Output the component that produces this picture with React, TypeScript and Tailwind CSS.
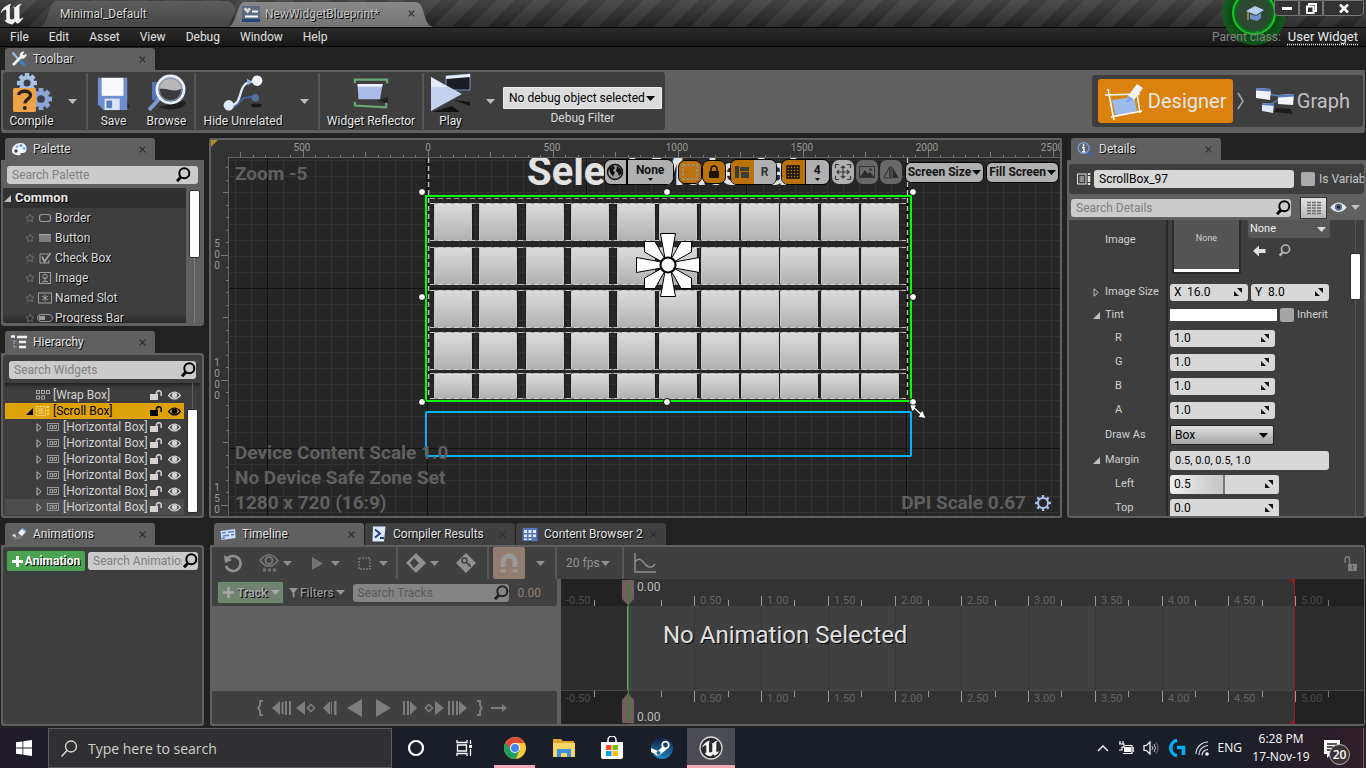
import React from "react";

const SHADOW = "[text-shadow:1px_1px_0_#000]";

/* ---------- small shared drawings ---------- */

function Caret({ className = "text-[#bdbdbd]" }: { className?: string }) {
  return (
    <svg width="9" height="5" viewBox="0 0 9 5" className={`shrink-0 ${className}`} aria-hidden="true">
      <path d="M0 0h9L4.5 5z" fill="currentColor" />
    </svg>
  );
}

function Close({ className = "" }: { className?: string }) {
  return (
    <button aria-label="Close tab" className={`flex h-3 w-3 items-center justify-center text-[#2e2e2e] ${className}`}>
      <svg width="7" height="7" viewBox="0 0 7 7" aria-hidden="true">
        <path d="M.7 .7l5.6 5.6M6.3 .7L.7 6.3" stroke="currentColor" strokeWidth="1.2" />
      </svg>
    </button>
  );
}

function Magnifier({ className = "text-black", size = 16 }: { className?: string; size?: number }) {
  return (
    <svg width={size} height={size} viewBox="0 0 16 16" className={`shrink-0 ${className}`} aria-hidden="true">
      <circle cx="9.3" cy="6.3" r="5" fill="none" stroke="currentColor" strokeWidth="2" />
      <path d="M6 10L2 14.2" stroke="currentColor" strokeWidth="3" />
    </svg>
  );
}

function SearchBox({ label, className = "", icon = "text-black", hint = "placeholder:text-[#808080]" }: { label: string; className?: string; icon?: string; hint?: string }) {
  return (
    <label className={`flex items-center rounded-[3px] pl-[5px] ${className}`}>
      <input
        type="text"
        aria-label={label}
        placeholder={label}
        className={`min-w-0 flex-1 bg-transparent text-[12px] leading-4 outline-none ${hint}`}
      />
      <Magnifier className={icon} />
    </label>
  );
}

function Tri({ open, className = "text-[#bdbdbd]" }: { open?: boolean; className?: string }) {
  return open ? (
    <svg width="7" height="7" viewBox="0 0 7 7" className={`shrink-0 ${className}`} aria-hidden="true">
      <path d="M7 0v7H0z" fill="currentColor" />
    </svg>
  ) : (
    <svg width="7" height="9" viewBox="0 0 7 9" className={`shrink-0 ${className}`} aria-hidden="true">
      <path d="M1 .8L5.2 4.5L1 8.2z" fill="none" stroke="currentColor" />
    </svg>
  );
}

function UnrealMark({ size, ring }: { size: number; ring?: boolean }) {
  return (
    <svg width={size} height={size} viewBox={ring ? "0 0 24 24" : "2.500 2.500 19 19"} aria-hidden="true">
      {ring && <circle cx="12" cy="12" r="11" fill="#2a2a2c" stroke="#d8d8d8" strokeWidth="1.3" />}
      <path
        d="M11 4.6C7 5.4 3.2 9 3 12.2c1-1.6 2.4-3 3.4-3 .8 0 .9.5.9 1.3v5.6c0 1-.6 1.2-1.5 1.1 1.5 2.2 3.8 3 6.2 3.1l2-2 1.7 1.5c2.3-1.1 4-3.1 4.7-5.1-1 .9-1.900 1.300-2.400 1.300-.5 0-.7-.3-.7-1V7.300c0-1 1.200-2.200 2-2.700-1.900 0-4.100 1.300-5.200 2.900-.4-.4-1-.7-1.700-.7.700.5.9 1.100.9 2v6.800c-.6.600-1.300.9-2 .9-.900 0-1.300-.5-1.300-1.400V8.200c0-1.500.3-2.600 1-3.600z"
        fill="#f4f4f4"
      />
    </svg>
  );
}

/* ---------- tabs ---------- */

function PanelTab({ title, icon, active = true }: { title: string; icon: React.ReactNode; active?: boolean }) {
  return (
    <div className={`flex h-[22px] w-[150px] items-center rounded-t-[3px] pl-[6px] pr-[7px] ${active ? "bg-[#606060]" : "bg-[#404040]"}`}>
      <span className="flex w-4 shrink-0 justify-center">{icon}</span>
      <span className={`ml-[6px] flex-1 whitespace-nowrap text-[12px] leading-4 text-[#e4e4e4] ${SHADOW}`}>{title}</span>
      <Close />
    </div>
  );
}

const TabIcons = {
  tools: (
    <svg width="16" height="16" viewBox="0 0 16 16">
      <path d="M1.500 1.500l6 7" stroke="#9dbdf0" strokeWidth="2" />
      <path d="M2 14L10.500 5.500" stroke="#f2f2f2" strokeWidth="2.600" />
      <path d="M9.300 5A3.200 3.200 0 0 1 13 1l-1.800 2.200 1.500 1.600L15 3.200A3.300 3.300 0 0 1 10.600 7z" fill="#f2f2f2" stroke="#f2f2f2" />
      <path d="M9 9.500l5 4.500" stroke="#3f7fd4" strokeWidth="3" />
    </svg>
  ),
  palette: (
    <svg width="16" height="14" viewBox="0 0 16 14">
      <path d="M1 9C1 4 5 1 9.500 1S15.500 4 15.500 7 13 11.500 11 11c-1.500-.3-2 .5-1.500 1.500S6 13.500 4 12.500 1 11 1 9z" fill="#f4f7ff" />
      <circle cx="6" cy="4.500" r="1.500" fill="#8bb8f0" /><circle cx="10" cy="3.500" r="1.500" fill="#5f97e0" />
      <circle cx="13" cy="6.300" r="1.500" fill="#74a8ec" /><circle cx="5" cy="9" r="1.700" fill="#444" />
    </svg>
  ),
  tree: (
    <svg width="16" height="14" viewBox="0 0 16 14">
      <path d="M0 1.500h4M6 2h10" stroke="#f0f0f0" strokeWidth="2.500" />
      <path d="M3 5v8M3 6.500h3M3 12h3" stroke="#9ab4e0" strokeDasharray="1.500 1" />
      <path d="M8 7h7M8 12h7" stroke="#f0f0f0" strokeWidth="2.500" />
    </svg>
  ),
  anim: (
    <svg width="16" height="14" viewBox="0 0 16 14">
      <path d="M0 9l3-3 3 4 5-8 4 4-6 6-5 1z" fill="#777" />
      <path d="M7 6l4-4.500 4 3-4 4.500z" fill="#e9f0ff" /><path d="M12 1l3 2.500-1 1.500-3-2.500z" fill="#79a6e6" />
      <path d="M1 8l3-1 1.500 4z" fill="#e2e2e2" />
    </svg>
  ),
  info: (
    <svg width="17" height="17" viewBox="0 0 17 17">
      <path d="M10.500 10.500l5 5" stroke="#3c66b8" strokeWidth="2.500" />
      <circle cx="7" cy="7" r="5.800" fill="#5a6470" stroke="#7fa6e8" strokeWidth="1.200" />
      <path d="M7 3v2M5.300 6.500H7.300V10.500M5.300 10.800H9" stroke="#fff" strokeWidth="1.600" fill="none" />
    </svg>
  ),
  film: (
    <svg width="16" height="13" viewBox="0 0 16 13">
      <path d="M.5 3L15 1l.5 9L1.500 12z" fill="#cfe0fb" />
      <path d="M2 5l4-.5M8 4.200l6-.7M3 8l6-.8M11 7l3-.4M2 10.500l3-.4" stroke="#5d80c8" strokeWidth="1.500" />
    </svg>
  ),
  log: (
    <svg width="14" height="16" viewBox="0 0 14 16">
      <path d="M1 .5h12.500L12 15.500H.5z" fill="#dce8ff" /><path d="M3 3.500l5 4-5 4M8 12h4" stroke="#173f84" strokeWidth="1.800" fill="none" />
    </svg>
  ),
  grid: (
    <svg width="16" height="15" viewBox="0 0 16 15">
      <path d="M.5 1H15.500V14H.5z" fill="#5276bd" />
      <path d="M2 3h3v3H2zM6.500 3h3v3h-3zM11 3h3v3h-3zM2 7.500h3v2.500H2zM6.500 7.500h3v2.500h-3zM11 7.500h3v2.500h-3zM2 11.500h3v1.500H2zM6.500 11.500h3v1.500h-3z" fill="#e5edfd" />
    </svg>
  ),
};

/* ---------- title and menu ---------- */

function TitleBar() {
  return (
    <header className="relative flex h-7 shrink-0 border-b border-black bg-[linear-gradient(180deg,rgba(80,80,80,0.55),rgba(20,20,20,0.5)),repeating-linear-gradient(135deg,#303030_0_13px,#494949_13px_26px)]">
      <div className="flex w-10 items-center"><UnrealMark size={25} /></div>
      <button className="h-full w-[196px] bg-[linear-gradient(180deg,#5e5e5e,#464646)] pl-5 text-left text-[12px] text-[#d8d8d8] [clip-path:path('M0_27C8_26_9_2_16_1H186C192_1_194_5_196_10L188_27Z')]">
        <span className={SHADOW}>Minimal_Default</span>
      </button>
      <div className="-ml-2 flex h-full w-[206px] items-center bg-[linear-gradient(180deg,#8a8a8a,#747474)] pl-[14px] pr-[13px] [clip-path:path('M0_27C8_26_9_3_16_2H188C198_3_194_26_206_27Z')]">
        <svg width="18" height="16" viewBox="0 0 18 16" aria-hidden="true">
          <rect width="18" height="16" fill="#24457c" /><rect y="0" width="18" height="13" fill="#5a6a80" />
          <path d="M1.500 3l2-1.500L5.500 3l2-1.500 1.500 2-3.500 4z" fill="#d5d5d5" />
          <path d="M10 5.500h6M3 10.500h13" stroke="#fff" strokeWidth="2" />
        </svg>
        <span className={`ml-[5px] flex-1 text-[12px] text-[#c4c4c4] ${SHADOW}`}>NewWidgetBlueprint*</span>
        <Close className="mr-1" />
      </div>
      <div className="ml-auto flex pr-[2px]">
        <button aria-label="Tutorials" className="relative h-7 w-16">
          <svg width="68" height="46" viewBox="0 0 68 46" className="absolute left-0 top-0 z-10" aria-hidden="true">
            <defs>
              <radialGradient id="halo"><stop offset="0.5" stopColor="#1d4a22" /><stop offset="0.64" stopColor="#0f7a1c" /><stop offset="0.65" stopColor="#0b4411" /><stop offset="1" stopColor="#0d6a18" stopOpacity="0.75" /></radialGradient>
            </defs>
            <circle cx="32" cy="13" r="32" fill="url(#halo)" />
            <circle cx="32" cy="13" r="21" fill="none" stroke="#19c22d" strokeWidth="2" />
            <circle cx="32" cy="13" r="17" fill="#3a4a3d" opacity=".6" />
            <path d="M24 11l9-5 9 4-8 5z" fill="#b9cdf5" /><path d="M28 14v5l7 2 4-3v-5l-5 3z" fill="#7190cf" />
            <path d="M26 12v8" stroke="#d0a04c" strokeWidth="1.300" />
          </svg>
        </button>
        <div className="relative z-20 -ml-3 flex h-4">
          <button aria-label="Minimize" className="flex w-[25px] items-center justify-center rounded-bl border border-[#777] bg-[#333]">
            <span className="h-[3px] w-[10px] bg-white" />
          </button>
          <button aria-label="Restore" className="flex w-6 items-center justify-center border border-[#777] bg-[#333]">
            <svg width="11" height="11" viewBox="0 0 11 11"><path d="M3 3V1h7v7H8M1 3.500h6.500V10H1z" fill="none" stroke="#fff" strokeWidth="2" /></svg>
          </button>
          <button aria-label="Close" className="flex w-[41px] items-center justify-center rounded-br border border-[#777] bg-[#333]">
            <svg width="10" height="9" viewBox="0 0 10 9"><path d="M1 .5l8 8M9 .5l-8 8" stroke="#fff" strokeWidth="2.600" /></svg>
          </button>
        </div>
      </div>
    </header>
  );
}

function MenuBar() {
  return (
    <nav className="flex h-[19px] shrink-0 items-center gap-5 border-b border-black bg-[linear-gradient(180deg,#2a2a2a,#181818)] px-[10px] text-[12px] text-[#e0e0e0]">
      {["File", "Edit", "Asset", "View", "Debug", "Window", "Help"].map((m) => (
        <button key={m} className="leading-4">{m}</button>
      ))}
      <div className="relative z-20 -mr-[2px] ml-auto flex items-center gap-[7px]">
        <span className="text-[#858585]">Parent class:</span>
        <a href="#parent" className="text-[13px] leading-4 text-[#ececec] underline decoration-dotted underline-offset-[3px]">User Widget</a>
      </div>
    </nav>
  );
}

/* ---------- toolbar ---------- */

const gear = (cx: number, cy: number, r: number, fill: string) => (
  <g fill={fill}>
    {[0, 45, 90, 135].map((a) => (
      <rect key={a} x={cx - r * 0.22} y={cy - r} width={r * 0.44} height={r * 2} transform={`rotate(${a} ${cx} ${cy})`} />
    ))}
    <circle cx={cx} cy={cy} r={r * 0.75} />
    <circle cx={cx} cy={cy} r={r * 0.35} fill="#3a3f48" />
  </g>
);

const ToolIcons = {
  compile: (
    <svg width="40" height="40" viewBox="0 0 40 40">
      {gear(15, 10, 10, "#a9bfe6")}{gear(29, 26, 11, "#8aa5d6")}
      <rect x="1" y="15" width="23" height="24" rx="1.500" fill="#f0a248" />
      <path d="M6.500 22c.5-5 12-5 12 .3 0 4-5.500 3.700-5.700 8" fill="none" stroke="#2a2320" strokeWidth="3.400" />
      <rect x="10.800" y="33" width="4" height="4" rx="2" fill="#2a2320" />
    </svg>
  ),
  save: (
    <svg width="38" height="36" viewBox="0 0 40 38">
      <path d="M28 34h9l-5-9z" fill="#151515" opacity=".7" />
      <path d="M3 3h31v34H9L3 31z" fill="#6f8fd2" />
      <path d="M7 3h23v19H7z" fill="#f7f9ff" /><path d="M10 25h16v12H10z" fill="#dde5f5" /><path d="M12 27h6v8h-6z" fill="#5c7cc0" />
    </svg>
  ),
  browse: (
    <svg width="42" height="38" viewBox="0 0 42 38">
      <path d="M12 33c12 5 30 2 27-6z" fill="#151515" opacity=".75" />
      <path d="M6 8h12v18H6z" fill="#5474b2" />
      <path d="M14 24L3 36" stroke="#7f9ad0" strokeWidth="4" />
      <circle cx="24.500" cy="15.500" r="13.500" fill="#3b3b3d" stroke="#e7eefc" strokeWidth="3" />
      <path d="M13 15A11.500 11.500 0 0 1 36 14C28 20 22 13 13 15z" fill="#b8b8ba" />
      <circle cx="24.500" cy="15.500" r="11.200" fill="none" stroke="#7e93bb" />
    </svg>
  ),
  hide: (
    <svg width="40" height="36" viewBox="0 0 42 38">
      <path d="M8 33c10 2 8-8 15-9l8-1" fill="none" stroke="#42609c" strokeWidth="2" /><circle cx="34" cy="24" r="4" fill="#54709f" />
      <ellipse cx="35" cy="32" rx="6" ry="2" fill="#181818" />
      <path d="M8 32c15-1 5-25 24-25" fill="none" stroke="#e0e8fa" strokeWidth="2.500" />
      <path d="M25 4l6 3-5 4" fill="#8fb0e6" />
      <circle cx="36" cy="6" r="5.500" fill="#f2f6ff" /><circle cx="6" cy="32" r="5.500" fill="#dfe9fc" />
    </svg>
  ),
  reflect: (
    <svg width="40" height="34" viewBox="0 0 42 38">
      <path d="M28 28l12-5v8z" fill="#181818" opacity=".7" />
      <path d="M3 8V4h36v4M3 29v4l35 2v-5" fill="none" stroke="#69a878" strokeWidth="2.500" />
      <path d="M6 9h28l-3 17H7z" fill="#a9bde8" /><path d="M6 9h28l-.5 3H6.200z" fill="#e9f0ff" />
    </svg>
  ),
  play: (
    <svg width="42" height="40" viewBox="0 0 42 40">
      <path d="M2 39h28l-8-6zM24 27l16 2v4z" fill="#131313" />
      <path d="M16 3l24-2v16H16z" fill="#1b1d24" stroke="#7692cc" /><path d="M16 3l24-2v3l-24 2z" fill="#e8efff" />
      <path d="M1 4v34l31-17z" fill="#c4d2f1" /><path d="M1 4v10l16 0z" fill="#e3ebfb" />
    </svg>
  ),
};

function Tool({ icon, label, className = "" }: { icon: React.ReactNode; label: string; className?: string }) {
  return (
    <button className={`flex h-full flex-col items-center justify-between whitespace-nowrap pb-[2px] ${className}`}>
      <span className="flex h-10 items-center">{icon}</span>
      <span className={`text-[12px] leading-3 text-[#e6e6e6] ${SHADOW}`}>{label}</span>
    </button>
  );
}

const Divider = () => <div className="h-full w-[2px] shrink-0 bg-[#585858]" />;

function Dropper({ label, w = "w-7" }: { label: string; w?: string }) {
  return <button aria-label={label} className={`flex h-full shrink-0 items-center justify-center ${w}`}><Caret /></button>;
}

function Toolbar() {
  return (
    <section className="shrink-0 px-[1px] pt-[1px]">
      <div className="flex pl-1"><PanelTab title="Toolbar" icon={TabIcons.tools} /></div>
      <div className="flex h-[63px] items-center justify-between rounded-b-[3px] bg-[#606060] px-[2px] pb-[1px]">
        <div className="flex h-[58px] items-center rounded-[3px] bg-[#3e3e3e] p-[1px] pr-[3px]">
          <Tool icon={ToolIcons.compile} label="Compile" className="w-[55px]" /><Dropper label="Compile options" w="w-[27px]" />
          <Divider />
          <Tool icon={ToolIcons.save} label="Save" className="w-[51px]" />
          <Tool icon={ToolIcons.browse} label="Browse" className="w-[55px]" />
          <Divider />
          <Tool icon={ToolIcons.hide} label="Hide Unrelated" className="w-[94px]" /><Dropper label="Hide options" />
          <Divider />
          <Tool icon={ToolIcons.reflect} label="Widget Reflector" className="w-[102px]" />
          <Divider />
          <Tool icon={ToolIcons.play} label="Play" className="w-[53px]" /><Dropper label="Play options" w="w-[26px]" />
          <label className="flex w-[159px] flex-col items-center gap-[1px] pt-[11px]">
            <span className="relative flex w-full items-center">
              <select className="h-[22px] w-full appearance-none rounded-[1px] border border-[#f0f0f0] bg-[#dcdcdc] pl-[5px] text-[12px] text-black">
                <option>No debug object selected</option>
              </select>
              <Caret className="pointer-events-none absolute right-[7px] text-black" />
            </span>
            <span className="text-[12px] leading-4 text-[#dcdcdc]">Debug Filter</span>
          </label>
        </div>
        <div className="flex h-[52px] items-center rounded-[3px] bg-[#3e3e3e] py-1 pl-[6px] pr-[13px]">
          <button className="flex h-11 w-[135px] items-center rounded-[3px] bg-[#da820d] pl-[5px] text-[20px] text-[#e8e8e8]">
            <svg width="41" height="40" viewBox="0 0 41 40" aria-hidden="true">
              <path d="M9 19l22-3 3 14-21 5z" fill="#9dbcec" />
              <path d="M2 14l35 -1M8 36l31-6M5 8l6 31M33 6l4 26" stroke="#fff" strokeWidth="1.600" />
              <path d="M22 23l3-8L34 3l6 4-9 12z" fill="#eef4ff" /><path d="M22 23l3-8 3 1 3 3z" fill="#7fa9e8" />
            </svg>
            <span className="ml-1">Designer</span>
          </button>
          <svg width="8" height="18" viewBox="0 0 8 18" className="ml-1" aria-hidden="true"><path d="M1 1l5 8-5 8" fill="none" stroke="#a5a5a5" strokeWidth="1.600" /></svg>
          <button className="ml-[10px] flex items-center text-[20px] text-[#c2c2c2]">
            <svg width="40" height="30" viewBox="0 0 40 30" aria-hidden="true">
              <path d="M18 26l20 2-3-5-14-1z" fill="#1b1b1b" />
              <path d="M14 8L24 10M14 20l10-7" stroke="#6280bd" strokeWidth="1.500" />
              <path d="M1 2l15 1-1 11L1 12z" fill="#f1f4fb" /><path d="M1 2l15 1v2.500L1 4.500z" fill="#5578bd" />
              <path d="M23 9l16-1-1 11-15-1z" fill="#f1f4fb" /><path d="M23 9l16-1v2.500l-16 1z" fill="#5578bd" />
              <path d="M7 17l12 1-1 9-11-2z" fill="#dfe6f6" /><path d="M7 17l12 1v2l-12-1z" fill="#5578bd" />
            </svg>
            <span className="ml-[2px]">Graph</span>
          </button>
        </div>
      </div>
    </section>
  );
}

/* ---------- left column ---------- */

const paletteIcons: Record<string, React.ReactNode> = {
  Border: <rect x="2.500" y="3.500" width="11" height="7" rx="2.500" fill="none" stroke="#9c9c9c" strokeWidth="1.200" />,
  Button: <g><rect x="2" y="3" width="12" height="8" fill="#7e7e7e" /><path d="M2 3.500h12" stroke="#a8a8a8" /></g>,
  "Check Box": <g fill="none" stroke="#a0a0a0"><path d="M11 3H3v9h9V9" /><path d="M5 5.500l2.500 5L13.500 2" strokeWidth="1.800" /></g>,
  Image: <g fill="none" stroke="#a0a0a0"><rect x="2.500" y="1.500" width="11" height="11" /><circle cx="8" cy="5.500" r="2.300" /><path d="M8 5.500v5M5 10.500h6" /></g>,
  "Named Slot": <g fill="none" stroke="#a0a0a0"><rect x="1.500" y="2" width="13" height="10" /><path d="M8 3.500v7M5 5l6 4M11 5L5 9" /></g>,
  "Progress Bar": <g><rect x=".5" y="3.500" width="15" height="7" rx="3.500" fill="none" stroke="#9c9c9c" /><rect x="2" y="5" width="6" height="4" fill="#9c9c9c" /></g>,
};

function Palette() {
  return (
    <section className="flex min-h-0 flex-1 flex-col">
      <div className="flex pl-1"><PanelTab title="Palette" icon={TabIcons.palette} /></div>
      <div className="flex min-h-0 flex-1 flex-col rounded-b-[3px] bg-[#606060] p-[2px] pb-[3px]">
        <SearchBox label="Search Palette" className="m-1 h-[18px] bg-[#cbcbcb] pr-[7px]" />
        <div className="flex min-h-0 flex-1">
          <div className="min-w-0 flex-1 overflow-hidden rounded-bl-[3px] bg-[linear-gradient(0deg,#2a2a2a,#3e3e3e_10px)]">
            <button className={`flex h-5 w-full items-center gap-1 bg-[#303030] pl-[1px] text-[13px] font-bold text-[#e8e8e8] ${SHADOW}`}>
              <Tri open />Common
            </button>
            <ul>
              {Object.keys(paletteIcons).map((n) => (
                <li key={n} className={`flex h-5 items-center pl-[22px] text-[12px] text-[#dadada] ${SHADOW}`}>
                  <svg width="10" height="10" viewBox="0 0 10 10" aria-hidden="true"><path d="M5 1l1.200 2.700 2.800.3-2.100 1.900.6 2.900L5 7.300 2.500 8.800l.6-2.900L1 4l2.800-.3z" fill="none" stroke="#6b6b6b" /></svg>
                  <svg width="16" height="14" viewBox="0 0 16 14" className="mx-[2px]" aria-hidden="true">{paletteIcons[n]}</svg>
                  {n}
                </li>
              ))}
            </ul>
          </div>
          <div className="flex w-4 flex-col items-center pt-[2px]">
            <div className="h-[68px] w-[11px] rounded-[2px] border border-[#303030] bg-white" />
            <div className="w-px flex-1 bg-[#7c7c7c]" />
          </div>
        </div>
      </div>
    </section>
  );
}

function LockIcon() {
  return (
    <svg width="12" height="10" viewBox="0 0 12 10" aria-hidden="true">
      <rect x="0" y="4" width="8" height="6" fill="currentColor" />
      <path d="M6.500 5V3a2.300 2.300 0 0 1 4.700 0v3" fill="none" stroke="currentColor" strokeWidth="1.500" />
    </svg>
  );
}

function EyeIcon() {
  return (
    <svg width="13" height="9" viewBox="0 0 13 9" aria-hidden="true">
      <path d="M.5 4.500Q6.500 -2.500 12.500 4.500Q6.500 11.500 .5 4.500z" fill="none" stroke="currentColor" strokeWidth="1.200" />
      <circle cx="6.500" cy="4.300" r="2.700" fill="currentColor" />
    </svg>
  );
}

function TreeRow({ indent, tri, icon, label, tone = "text-[#d2d2d2]" }: { indent: string; tri?: React.ReactNode; icon: React.ReactNode; label: string; tone?: string }) {
  return (
    <li className={`flex h-4 shrink-0 items-center pr-[3px] text-[12px] ${indent} ${tone}`}>
      {tri}
      <svg width="14" height="12" viewBox="0 0 14 12" className="mx-[3px] shrink-0" aria-hidden="true">{icon}</svg>
      <span className="min-w-0 flex-1 overflow-hidden whitespace-nowrap leading-4">{label}</span>
      <button aria-label="Lock" className="ml-[3px] mr-[6px]"><LockIcon /></button>
      <button aria-label="Visibility"><EyeIcon /></button>
    </li>
  );
}

const scrollGlyph = (
  <g fill="none" stroke="currentColor"><rect x=".5" y="1.500" width="9" height="9" strokeDasharray="2 1" /><path d="M2.500 4h5M2.500 6h5M2.500 8h5" /><path d="M12 1v10" strokeDasharray="2 1.500" strokeWidth="2" /></g>
);
const boxGlyph = (
  <g fill="none" stroke="#9a9a9a"><rect x="1.500" y="2.500" width="11" height="7" /><rect x="4" y="4.500" width="2.500" height="3" /><rect x="8" y="4.500" width="2.500" height="3" /></g>
);
const wrapGlyph = (
  <g fill="none" stroke="#a8a8a8"><rect x=".5" y="1.500" width="3" height="3" /><rect x="5.500" y="1.500" width="3" height="3" /><rect x="10.500" y="1.500" width="3" height="3" /><rect x=".5" y="7" width="3" height="3" /><rect x="5.500" y="7" width="3" height="3" /></g>
);

function Hierarchy() {
  return (
    <section className="mt-[5px] flex shrink-0 flex-col">
      <div className="flex pl-1"><PanelTab title="Hierarchy" icon={TabIcons.tree} /></div>
      <div className="rounded-[3px] rounded-tl-none bg-[#606060] p-[2px]">
        <div className="rounded-[3px] bg-[#3e3e3e] px-[2px] pb-[1px] pt-[6px]">
          <SearchBox label="Search Widgets" className="ml-1 mr-[4px] h-[18px] bg-[#cbcbcb]" />
          <div className="mt-1 flex h-[132px] shadow-[inset_0_5px_4px_-3px_#1d1d1d]">
            <ul className="flex min-w-0 flex-1 flex-col justify-end overflow-hidden">
              <TreeRow indent="pl-7" icon={wrapGlyph} label="[Wrap Box]" />
              <TreeRow indent="bg-[#dea20a] pl-[21px]" tri={<Tri open className="text-black" />} tone="text-black" icon={<g className="text-[#f6d98c]">{scrollGlyph}</g>} label="[Scroll Box]" />
              {[0, 1, 2, 3, 4, 5].map((i) => (
                <TreeRow key={i} indent={i === 5 ? "bg-[#4c4c4c] pl-[31px]" : "pl-[31px]"} tri={<Tri />} icon={boxGlyph} label="[Horizontal Box]" />
              ))}
            </ul>
            <div className="flex w-4 flex-col items-center pb-[2px]">
              <div className="w-px flex-1 bg-[#606060]" />
              <div className="h-[104px] w-[11px] rounded-[2px] border border-[#2d2d2d] bg-white" />
            </div>
          </div>
        </div>
      </div>
    </section>
  );
}

/* ---------- designer canvas ---------- */

const COLS = [434, 479, 526, 571, 617, 659, 701, 741, 780, 821, 861];
const ROWS: [number, number][] = [[203, 38], [247, 38], [290, 38], [332, 38], [373, 26]];
const range = (from: number, to: number, step: number) => {
  const out: number[] = [];
  for (let v = from; v <= to; v += step) out.push(v);
  return out;
};

function Surface() {
  return (
    <svg width="849" height="376" viewBox="211 140 849 376" className="absolute inset-0" aria-label="Design surface">
      <defs>
        <linearGradient id="cell" x1="0" y1="0" x2="0" y2="1"><stop offset="0" stopColor="#dcdcdc" /><stop offset="1" stopColor="#b0b0b0" /></linearGradient>
        <linearGradient id="gold" x1="0" y1="0" x2="1" y2="1"><stop offset="0" stopColor="#c79f28" /><stop offset="1" stopColor="#8f701a" /></linearGradient>
      </defs>
      <rect x="211" y="140" width="849" height="376" fill="#333" />
      <rect x="228" y="157" width="832" height="359" fill="#262626" />
      <g shapeRendering="crispEdges">
        {range(235, 1060, 16).map((x) => <rect key={x} x={x} y="158" width="1" height="358" fill="#323232" />)}
        {range(160, 516, 16).map((y) => <rect key={y} x="229" y={y} width="831" height="1" fill="#323232" />)}
        {[267, 427, 586, 746, 906].map((x) => <rect key={x} x={x} y="158" width="1" height="358" fill="#111" />)}
        {[288, 448].map((y) => <rect key={y} x="229" y={y} width="831" height="1" fill="#111" />)}
        <path d="M228.500 516V157.500H1060" fill="none" stroke="#626262" />
        {range(0, 66, 1).map((i) => {
          const x = Math.round(240 + i * 12.5);
          const h = i % 10 === 5 ? 7 : i % 5 === 0 ? 5 : 2;
          return <rect key={i} x={x} y={157 - h} width="1" height={h} fill="#7a7a7a" />;
        })}
        {range(0, 27, 1).map((i) => {
          const y = Math.round(167 + i * 12.5);
          const w = i % 10 === 7 ? 7 : i % 5 === 2 ? 5 : 2;
          return <rect key={i} x={228 - w} y={y} width={w} height="1" fill="#7a7a7a" />;
        })}
      </g>
      <path d="M209 138h11l-11 11z" fill="url(#gold)" />
      <g fill="#9a9a9a" fontSize="10" fontFamily="Roboto" textAnchor="middle">
        {[["500", 302], ["0", 428], ["500", 552], ["1000", 677], ["1500", 802], ["2000", 927], ["2500", 1052]].map(([t, x], i) => <text key={i} x={x} y="151">{t}</text>)}
        {[["5", 247], ["0", 258], ["0", 269], ["1", 366], ["0", 377], ["0", 388], ["0", 399], ["1", 491], ["5", 502], ["0", 513]].map(([t, y], i) => <text key={i} x="217" y={y}>{t}</text>)}
      </g>
      <clipPath id="below"><rect x="229" y="158" width="831" height="358" /></clipPath>
      <text x="527" y="185" fontSize="40" fontWeight="700" fontFamily="Roboto" fill="#e2e2e2" clipPath="url(#below)">Select Material</text>
      <path d="M427.500 158V396M907.500 158V396" stroke="#000" strokeWidth="2" />
      <path d="M428.500 158V398M907.500 158V398" stroke="#c4c4c4" strokeDasharray="5 3" strokeWidth="1.500" />
      <path d="M430 198.500H906" stroke="#999" strokeDasharray="5 3" />
      {ROWS.map(([y, h]) => (
        <g key={y}>
          <path d={`M430 ${y + 0.5}H906M430 ${y + h - 0.5}H906`} stroke="#5c5c5c" strokeWidth="1" />
          {COLS.map((x) => (
            <g key={x}>
              <rect x={x - 1} y={y} width="40" height={h} fill="#1c1c1c" />
              <rect x={x + 0.5} y={y + 0.5} width="37" height={h - 1} rx="1" fill="url(#cell)" stroke="#cacaca" strokeWidth="1" />
            </g>
          ))}
          <path d={`M430 ${y + 0.5}H906M430 ${y + h - 0.5}H906`} stroke="#8c8c8c" strokeOpacity="0.7" strokeWidth="1" />
          <path d={`M430 ${y + 0.5}H906M430 ${y + h - 0.5}H906`} stroke="#dcdcdc" strokeOpacity="0.75" strokeWidth="1" strokeDasharray="5 3" />
        </g>
      ))}
      <rect x="426" y="412" width="485" height="44" rx="1" fill="none" stroke="#00b4ff" strokeWidth="2" />
      <rect x="426" y="196" width="485" height="205" fill="none" stroke="#00ff00" strokeWidth="2" />
      <g fill="#fff" stroke="#000" strokeWidth="1">
        {[[422, 192], [667, 192], [913, 192], [422, 297], [913, 297], [422, 402], [667, 402], [913, 402]].map(([x, y]) => <circle key={`${x}-${y}`} cx={x} cy={y} r="3.500" />)}
        {[0, 90, 180, 270].map((a) => <path key={a} d="M660.500 233.500h15l-4.500 25h-6z" transform={`rotate(${a} 668 265)`} />)}
        {[0, 90, 180, 270].map((a) => <path key={a} d="M644.500 241.500h10.500l9 16-3.500 3.500-16-9z" transform={`rotate(${a} 668 265)`} />)}
        <circle cx="668" cy="265" r="7.500" strokeWidth="2" />
        <path d="M910 405h6.500l-1.500 2.500 5.500 5 2-2 3.500 8-8-1.500 2-2.500-5.500-5-2.500 2z" strokeWidth=".6" />
      </g>
    </svg>
  );
}

function Pill({ label, className, children }: { label: string; className: string; children: React.ReactNode }) {
  return <button aria-label={label} className={`flex h-6 shrink-0 items-center justify-center ${className}`}>{children}</button>;
}

function CanvasBar() {
  const grey = "bg-[#b0b0b0] text-[#141414]";
  return (
    <div className="absolute right-0 top-[19px] flex items-center gap-[2px] pr-[1px] text-[12px] font-bold">
      <div className="mr-[2px] flex divide-x-2 divide-black overflow-hidden rounded-[7px] border border-black">
        <Pill label="Localization" className={`w-[23px] ${grey}`}>
          <svg width="18" height="18" viewBox="0 0 18 18"><circle cx="9" cy="9" r="7.500" fill="#999" stroke="#111" strokeWidth="1.500" /><path d="M3 5l4-2.500L9 5 7 7.500l2 2-2 4-3-4zM11 3l4 3 1 4-3 3-1-3-2-2z" fill="#111" /></svg>
        </Pill>
        <button className={`flex h-6 w-[45px] flex-col items-center pt-[2px] ${grey}`}>
          <span className="leading-4">None</span><svg width="5" height="3" viewBox="0 0 5 3"><path d="M0 0h5L2.500 3z" fill="#111" /></svg>
        </button>
      </div>
      <Pill label="Show outlines" className="-mr-[2px] w-6 rounded-[7px] border border-black bg-[#bc720c]">
        <svg width="16" height="16" viewBox="0 0 16 16"><rect x="1" y="1" width="14" height="14" fill="none" stroke="#8d99a8" strokeWidth="1.500" strokeDasharray="3 1.500" /></svg>
      </Pill>
      <Pill label="Respect locks" className="mr-[2px] w-6 rounded-[7px] border border-black bg-[#bc720c]">
        <svg width="12" height="14" viewBox="0 0 12 14"><rect x="1" y="6" width="10" height="7" rx="1" fill="#1d1408" /><path d="M3 6V4a3 3 0 0 1 6 0v2" fill="none" stroke="#1d1408" strokeWidth="1.600" /></svg>
      </Pill>
      <div className="mr-[2px] flex overflow-hidden rounded-[7px] border border-black">
        <Pill label="Layout" className="w-[23px] bg-[#bc720c]"><svg width="14" height="12" viewBox="0 0 14 12"><path d="M0 0h4v12H0zM5 1h9v4H5zM6 6h8v6H6z" fill="#3c3c3c" /></svg></Pill>
        <button className="h-6 w-[22px] bg-[#b0b0b0] text-[#333]">R</button>
      </div>
      <div className="flex overflow-hidden rounded-[7px] border border-black">
        <Pill label="Grid snap" className="w-[23px] bg-[#bc720c]"><svg width="14" height="14" viewBox="0 0 14 14"><path d="M1 1h12v12H1zM4 1v12M7 1v12M10 1v12M1 4h12M1 7h12M1 10h12" fill="none" stroke="#111" strokeWidth="1.400" /></svg></Pill>
        <button className={`flex h-6 w-6 flex-col items-center border-l border-black pt-[2px] ${grey}`}>
          <span className="leading-4">4</span><svg width="5" height="3" viewBox="0 0 5 3"><path d="M0 0h5L2.500 3z" fill="#111" /></svg>
        </button>
      </div>
      <Pill label="Zoom to fit" className="w-[22px] rounded-[7px] bg-[#b0b0b0]">
        <svg width="18" height="18" viewBox="0 0 18 18"><path d="M5 1.500H1.500V5M13 1.500h3.500V5M5 16.500H1.500V13M13 16.500h3.500V13M9 3v12M3 9h12M7 5l2-2 2 2M7 13l2 2 2-2M5 7L3 9l2 2M13 7l2 2-2 2" fill="none" stroke="#3c3c3c" strokeWidth="1.200" /></svg>
      </Pill>
      <Pill label="Preview image" className="w-[22px] rounded-[7px] bg-[#686868]">
        <svg width="16" height="12" viewBox="0 0 16 12"><rect x=".5" y=".5" width="15" height="11" fill="none" stroke="#333" /><path d="M1 11l5-7 3 4 2-2 4 5z" fill="#2c2c2c" /><circle cx="11.500" cy="3.500" r="1.200" fill="#2c2c2c" /></svg>
      </Pill>
      <Pill label="Mirror" className="mr-[1px] w-[22px] rounded-[7px] bg-[#686868]">
        <svg width="16" height="13" viewBox="0 0 16 13"><path d="M6.500 1v11H.8z" fill="none" stroke="#333" /><path d="M9.500 1v11h6z" fill="#2a2a2a" /><path d="M8 0v13" stroke="#222" /></svg>
      </Pill>
      {["Screen Size", "Fill Screen"].map((t) => (
        <button key={t} className={`flex h-[21px] items-center gap-[1px] whitespace-nowrap rounded-[6px] border border-black px-[2px] ${grey}`}>{t}<Caret className="text-black" /></button>
      ))}
    </div>
  );
}

function Viewport() {
  const note = "text-[19px] font-bold leading-[25px] text-[#606060]";
  return (
    <main className="relative min-w-0 flex-1 overflow-hidden rounded-[2px] border-2 border-[#606060] bg-[#262626]">
      <Surface />
      <div className={`absolute left-6 top-[21px] ${note}`}>Zoom -5</div>
      <CanvasBar />
      <div className={`absolute bottom-[1px] left-6 ${note}`}>
        <p>Device Content Scale 1.0</p><p>No Device Safe Zone Set</p><p>1280 x 720 (16:9)</p>
      </div>
      <div className={`absolute bottom-[1px] right-2 flex items-center gap-2 ${note}`}>
        DPI Scale 0.67
        <button aria-label="DPI settings"><svg width="18" height="18" viewBox="0 0 18 18"><g stroke="#aabfea" strokeWidth="2.400">{[0, 45, 90, 135].map((a) => <path key={a} d="M9 1v16" transform={`rotate(${a} 9 9)`} />)}</g><circle cx="9" cy="9" r="5" fill="#262626" stroke="#aabfea" strokeWidth="2" /></svg></button>
      </div>
    </main>
  );
}

/* ---------- details ---------- */

function Spin({ value, label, prefix, className = "h-[17px] w-[105px]", fill }: { value: string; label: string; prefix?: string; className?: string; fill?: boolean }) {
  return (
    <label className={`flex items-center rounded-[3px] pl-1 pr-[6px] text-[12px] text-black ${className} ${fill ? "bg-[linear-gradient(90deg,#f0f0f0,#c4c4c4_53px,#777_53px,#777_55px,#d8d8d8_55px)]" : "bg-[#d8d8d8]"}`}>
      {prefix && <span className="w-[13px]">{prefix}</span>}
      <input aria-label={label} defaultValue={value} className="min-w-0 flex-1 bg-transparent leading-4 outline-none" />
      <svg width="8" height="8" viewBox="0 0 8 8" aria-hidden="true"><path d="M3 0h5v5zM0 3v5h5z" fill="#111" /></svg>
    </label>
  );
}

function Field({ label, h = "h-6", indent = "pl-9", tri, children }: { label: string; h?: string; indent?: string; tri?: React.ReactNode; children: React.ReactNode }) {
  return (
    <div className={`flex shrink-0 ${h}`}>
      <div className={`flex w-[99px] shrink-0 items-center border-r-2 border-[#292929] text-[11px] text-[#d0d0d0] ${indent}`}>
        {tri && <span className="mr-[5px] flex w-[7px]">{tri}</span>}
        {label}
      </div>
      <div className="flex items-center gap-[3px] pl-[2px]">{children}</div>
    </div>
  );
}

function Details() {
  return (
    <aside className="flex w-[299px] shrink-0 flex-col">
      <div className="flex pl-1"><PanelTab title="Details" icon={TabIcons.info} /></div>
      <div className="flex min-h-0 flex-1 flex-col overflow-hidden rounded-b-[3px] bg-[#606060] px-[2px] pb-[2px] pt-1">
        <div className="flex h-[30px] shrink-0 items-center overflow-hidden rounded-[3px] bg-[#3e3e3e] pl-2 text-[12px]">
          <svg width="14" height="14" viewBox="0 0 14 14" className="shrink-0" aria-hidden="true"><g fill="none" stroke="#e0e0e0"><rect x=".5" y="2" width="8.500" height="10" /><path d="M2.500 5h4.500M2.500 7h4.500M2.500 9h4.500" /></g><path d="M12 1v12" stroke="#e0e0e0" strokeWidth="2.500" strokeDasharray="2 1 6 1" /></svg>
          <input aria-label="Widget name" defaultValue="ScrollBox_97" className="ml-[3px] h-[18px] w-[200px] shrink-0 rounded-[3px] bg-[#d8d8d8] px-[5px] text-black outline-none" />
          <label className="ml-[7px] flex items-center gap-1 whitespace-nowrap text-[#c8c8c8]">
            <input type="checkbox" className="h-[14px] w-[14px] shrink-0 appearance-none rounded-[2px] bg-[#aaa]" />Is Variable
          </label>
        </div>
        <div className="flex h-[26px] shrink-0 items-center pl-[2px] pt-[1px]">
          <SearchBox label="Search Details" className="h-[18px] w-[220px] bg-[#cbcbcb]" />
          <button aria-label="Property matrix" className="ml-[9px] flex h-[22px] w-[27px] items-center justify-center border border-[#333] bg-[linear-gradient(180deg,#e2e2e2,#b8b8b8)]">
            <svg width="14" height="14" viewBox="0 0 14 14"><path d="M0 1.500h14M0 4.200h14M0 7h14M0 9.700h14M0 12.500h14" stroke="#6b6b6b" strokeWidth="1.600" strokeDasharray="4 1" /></svg>
          </button>
          <button aria-label="View options" className="ml-[3px] flex items-center gap-1">
            <svg width="17" height="11" viewBox="0 0 18 12"><path d="M0 6Q9 -5 18 6Q9 16 0 6z" fill="#e8e8e8" /><circle cx="9" cy="5.500" r="4" fill="#5a6f96" /><circle cx="9" cy="5.500" r="1.800" fill="#222" /></svg>
            <Caret />
          </button>
        </div>
        <div className="flex min-h-0 flex-1 overflow-hidden bg-[#3e3e3e]">
          <div className="flex min-w-0 flex-1 flex-col overflow-hidden">
            <Field label="Image" h="-mt-5 h-20">
              <div className="ml-[2px] flex h-[68px] w-[69px] flex-col border-2 border-[#2a2a2a] bg-[#555]">
                <span className="flex flex-1 items-center justify-center text-[9px] text-[#d0d0d0]">None</span>
                <span className="h-[3px] bg-white" />
              </div>
              <div className="ml-1 flex h-full flex-col pt-5">
                <label className="relative flex h-[18px] items-center">
                  <select aria-label="Image asset" className="h-[18px] w-[82px] appearance-none rounded-b-[3px] bg-[#575757] pl-[2px] text-[11px] text-[#eee]"><option>None</option></select>
                  <Caret className="pointer-events-none absolute right-1 text-[#d8d8d8]" />
                </label>
                <div className="mt-[6px] flex items-center gap-3 pl-[5px]">
                  <button aria-label="Use selected"><svg width="13" height="12" viewBox="0 0 13 12"><path d="M0 6l6-5.500V4h6.500v4H6v3.500z" fill="#e0e0e0" /></svg></button>
                  <button aria-label="Browse to asset"><Magnifier size={13} className="text-[#b8b8b8]" /></button>
                </div>
              </div>
            </Field>
            <Field label="Image Size" indent="pl-6" tri={<Tri />}>
              <Spin label="Image size X" prefix="X" value="16.0" className="h-[17px] w-[78px]" />
              <Spin label="Image size Y" prefix="Y" value="8.0" className="h-[17px] w-[78px]" />
            </Field>
            <Field label="Tint" h="h-[22px]" indent="pl-6" tri={<Tri open />}>
              <button aria-label="Tint colour" className="h-3 w-[107px] bg-white" />
              <label className="flex items-center gap-[3px] text-[11px] text-[#d0d0d0]"><input type="checkbox" className="h-[14px] w-[14px] appearance-none rounded-[2px] bg-[#a4a4a4]" />Inherit</label>
            </Field>
            {["R", "G", "B", "A"].map((c) => <Field key={c} label={c} indent="pl-[46px]"><Spin label={c} value="1.0" /></Field>)}
            <Field label="Draw As" h="h-[26px]">
              <span className="relative flex items-center">
                <select aria-label="Draw As" className="h-5 w-[104px] appearance-none rounded-[2px] border border-[#222] bg-[linear-gradient(180deg,#dedede,#a6a6a6)] pl-1 text-[12px] text-black"><option>Box</option></select>
                <Caret className="pointer-events-none absolute right-[6px] text-black" />
              </span>
            </Field>
            <Field label="Margin" indent="pl-6" tri={<Tri open />}>
              <input aria-label="Margin" defaultValue="0.5, 0.0, 0.5, 1.0" className="h-[19px] w-[159px] rounded-[3px] bg-[#d8d8d8] px-[5px] text-[11px] text-black outline-none" />
            </Field>
            <Field label="Left" indent="pl-[46px]"><Spin label="Left" value="0.5" fill className="h-[19px] w-[109px]" /></Field>
            <Field label="Top" indent="pl-[46px]"><Spin label="Top" value="0.0" className="h-[19px] w-[109px]" /></Field>
          </div>
          <div className="flex w-[18px] shrink-0 flex-col items-center">
            <div className="h-[33px] w-px bg-[#555]" />
            <div className="h-[47px] w-[11px] shrink-0 rounded-[2px] border border-[#2d2d2d] bg-white" />
            <div className="w-px flex-1 bg-[#555]" />
          </div>
        </div>
      </div>
    </aside>
  );
}

/* ---------- bottom ---------- */

function Animations() {
  return (
    <section className="flex w-[203px] shrink-0 flex-col">
      <div className="flex pl-1"><PanelTab title="Animations" icon={TabIcons.anim} /></div>
      <div className="flex-1 rounded-[3px] rounded-tl-none bg-[#606060] p-[2px]">
        <div className="flex h-full items-start gap-[3px] rounded-[3px] bg-[#3e3e3e] px-1 pt-1">
          <button className={`flex h-5 w-[78px] items-center justify-center gap-[2px] rounded-[2px] bg-[#4aa350] text-[12px] font-bold text-white ${SHADOW}`}>
            <svg width="11" height="11" viewBox="0 0 11 11" aria-hidden="true"><path d="M5.500 0v11M0 5.500h11" stroke="#fff" strokeWidth="3" /></svg>
            Animation
          </button>
          <SearchBox label="Search Animations" className="mt-[1px] h-[18px] min-w-0 flex-1 bg-[#cbcbcb]" />
        </div>
      </div>
    </section>
  );
}

function TIcon({ label, w, children, className = "" }: { label: string; w: string; children: React.ReactNode; className?: string }) {
  return <button aria-label={label} className={`flex h-full shrink-0 items-center justify-center ${w} ${className}`}>{children}</button>;
}

function TimeRuler() {
  const X = (s: number) => Math.round(627.5 + s * 133.5);
  const halves = range(1, 10, 1);
  const label = (s: number) => s.toFixed(2);
  return (
    <svg width="803" height="145" viewBox="561 579 803 145" className="block" aria-label="Timeline ruler">
      <rect x="561" y="579" width="803" height="145" rx="2" fill="#222" />
      <rect x="561" y="606" width="803" height="84" fill="#2d2d2d" />
      <path d="M627 579H1290l4 4V720l-4 4H627z" fill="#333" />
      <rect x="627" y="606" width="667" height="84" fill="#404040" />
      <rect x="561" y="690" width="803" height="1" fill="#484848" />
      <g shapeRendering="crispEdges">
        {halves.slice(0, 9).map((i) => <rect key={i} x={X(i / 2)} y="606" width="1" height="84" fill="#363636" />)}
        {halves.map((i) => <g key={i} fill="#999"><rect x={X(i / 2)} y="596" width="1" height="10" /><rect x={X(i / 2)} y="691" width="1" height="11" /></g>)}
        {range(-1, 20, 2).map((i) => <g key={i} fill="#999"><rect x={X(i / 4)} y="600" width="1" height="6" /><rect x={X(i / 4)} y="691" width="1" height="6" /></g>)}
        <rect x={X(5.25)} y="600" width="1" height="6" fill="#777" /><rect x={X(5.25)} y="691" width="1" height="6" fill="#777" />
      </g>
      <g fontFamily="Roboto" fontSize="11" fill="#646464">
        {halves.map((i) => <g key={i} fill={i === 10 ? "#484848" : "#646464"}><text x={X(i / 2) + 6} y="604">{label(i / 2)}</text><text x={X(i / 2) + 6} y="702">{label(i / 2)}</text></g>)}
        <text x="566" y="604" fill="#4c4c4c">-0.50</text><text x="566" y="702" fill="#4c4c4c">-0.50</text>
      </g>
      <rect x="1294" y="579" width="1" height="145" fill="#8e2020" />
      <path d="M1289 579h5v5zM1289 724h5v-5z" fill="#8e2020" />
      <path d="M622 580h12v19l-6 6-6-6zM622 723h12v-23l-6-7-6 7z" fill="#725f5e" />
      <path d="M627.500 606V690" stroke="#888" /><path d="M628.500 581V722" stroke="#1d8c2a" strokeWidth="1" />
      <g fontFamily="Roboto" fontSize="12" fill="#bcbcbc"><text x="637" y="591">0.00</text><text x="637" y="721">0.00</text></g>
      <text x="663" y="643" fontFamily="Roboto" fontSize="24" fill="#e0e0e0" className="[text-shadow:1px_1px_0_#000]">No Animation Selected</text>
    </svg>
  );
}

const transport: [string, number, string, React.ReactNode][] = [
  ["Set start", 8, "ml-0", <path d="M7 1L3 1v5L1 9l2 3v5h4v-2H5v-3.500L3.500 9 5 6.500V3h2z" />],
  ["To front", 20, "ml-2", <path d="M8 2v14L0 9zM9.500 3h2v12h-2zM13 2h2v14h-2zM17 2h2v14h-2z" />],
  ["Previous key", 20, "ml-1", <g><path d="M9 2v14L0 9z" /><path d="M15 5.500L18.500 9 15 12.500 11.500 9z" fill="none" stroke="currentColor" strokeWidth="1.600" /></g>],
  ["Step back", 14, "ml-[7px]", <path d="M7 2v14L0 9zM8 3h1v12H8zM11 2h2.500v14H11z" />],
  ["Reverse", 16, "ml-[10px]", <path d="M15 0v18L0 9z" />],
  ["Play", 16, "ml-3", <path d="M1 0v18l15-9z" />],
  ["Step forward", 14, "ml-3", <path d="M0 2h2v14H0zM4 2h2v14H4zM7 2v14l7-7z" />],
  ["Next key", 20, "ml-[7px]", <g><path d="M11 2v14l9-7z" /><path d="M5 5.500L8.500 9 5 12.500 1.500 9z" fill="none" stroke="currentColor" strokeWidth="1.600" /></g>],
  ["To end", 20, "ml-1", <path d="M0 2h2v14H0zM4 2h2v14H4zM8 2h2v14H8zM11 2v14l8-7z" />],
  ["Set end", 8, "ml-2", <path d="M1 1h4v5l2 3-2 3v5H1v-2h2v-3.500L4.500 9 3 6.500V3H1z" />],
  ["Loop", 16, "ml-[7px]", <path d="M0 8h11V5l5 4-5 4v-3H0z" />],
];

function Timeline() {
  return (
    <section className="flex min-w-0 flex-1 flex-col">
      <div className="flex gap-[1px] pl-1">
        <PanelTab title="Timeline" icon={TabIcons.film} />
        <PanelTab title="Compiler Results" icon={TabIcons.log} active={false} />
        <PanelTab title="Content Browser 2" icon={TabIcons.grid} active={false} />
      </div>
      <div className="flex-1 overflow-hidden rounded-[3px] rounded-tl-none bg-[#606060] p-[2px] pr-[1px]">
        <div className="flex h-8 items-center rounded-[2px] bg-[#404040] pl-[6px] text-[#909090]">
          <TIcon label="Restore state" w="w-[30px]"><svg width="20" height="20" viewBox="0 0 20 20"><path d="M4 6a7.500 7.500 0 1 1-1 7" fill="none" stroke="currentColor" strokeWidth="2.600" /><path d="M1 2l1 8 7-3z" fill="currentColor" /></svg></TIcon>
          <TIcon label="View options" w="w-[54px]" className="gap-1"><svg width="20" height="20" viewBox="0 0 20 20" className="text-[#747474]"><path d="M1 7.500Q10 -4 19 7.500Q10 19 1 7.500z" fill="none" stroke="currentColor" strokeWidth="1.600" /><circle cx="10" cy="7.500" r="3.500" fill="none" stroke="currentColor" strokeWidth="2" /><path d="M4 17h3M9 17h3M14 17h3" stroke="currentColor" strokeWidth="3" /></svg><Caret className="text-[#909090]" /></TIcon>
          <TIcon label="Playback" w="w-12" className="gap-2"><svg width="11" height="13" viewBox="0 0 11 13"><path d="M0 0l11 6.500L0 13z" fill="#747474" /></svg><Caret className="text-[#909090]" /></TIcon>
          <TIcon label="Selection" w="w-[46px]" className="gap-2"><svg width="13" height="13" viewBox="0 0 13 13"><rect x="1" y="1" width="11" height="11" fill="none" stroke="#909090" strokeDasharray="2 1" /></svg><Caret className="text-[#909090]" /></TIcon>
          <div className="h-full w-[2px] bg-[#585858]" />
          <TIcon label="Key options" w="w-12" className="gap-1"><svg width="20" height="20" viewBox="0 0 20 20"><path d="M10 0l10 10-10 10L0 10z" fill="currentColor" /><path d="M8 5l5 5-5 5-4-5z" fill="#404040" /></svg><Caret className="text-[#909090]" /></TIcon>
          <TIcon label="Auto key" w="w-[40px]"><svg width="20" height="20" viewBox="0 0 20 20"><path d="M10 0l10 10-10 10L0 10z" fill="currentColor" /><circle cx="8.500" cy="7.500" r="2.500" fill="none" stroke="#404040" strokeWidth="1.500" /><path d="M10 9l5 5M12 13l2-2" stroke="#404040" strokeWidth="1.500" /></svg></TIcon>
          <div className="ml-[1px] h-full w-[2px] bg-[#585858]" />
          <TIcon label="Snapping" w="w-8" className="ml-1 rounded-[2px] bg-[#937d70]"><svg width="20" height="20" viewBox="0 0 20 20"><path d="M4 14V9a6 6 0 0 1 12 0v5" fill="none" stroke="#999" strokeWidth="5" /><path d="M1.500 16.500h5v3h-5zM13.500 16.500h5v3h-5z" fill="#999" /></svg></TIcon>
          <TIcon label="Snap options" w="w-[30px]"><Caret className="text-[#909090]" /></TIcon>
          <div className="h-full w-[2px] bg-[#585858]" />
          <button className="ml-[9px] flex h-full items-center whitespace-nowrap text-[12px]">20 fps<Caret className="ml-[1px] text-[#909090]" /></button>
          <div className="ml-3 h-full w-[2px] bg-[#585858]" />
          <TIcon label="Curve editor" w="w-[42px]"><svg width="22" height="20" viewBox="0 0 22 20"><path d="M1 0v19h21M1 9c6-8 9 4 14 5 3 .5 5-1 6-3" fill="none" stroke="currentColor" strokeWidth="1.400" /></svg></TIcon>
          <button aria-label="Lock timeline" className="ml-auto mr-[7px]"><svg width="13" height="15" viewBox="0 0 13 15"><rect x="4" y="8" width="9" height="7" fill="#808080" /><path d="M1 7V3a2 2 0 0 1 4.500 0v5" fill="none" stroke="#808080" strokeWidth="1.300" /><path d="M8.500 9.500v4" stroke="#404040" strokeDasharray="2 1" /></svg></button>
        </div>
        <div className="flex">
          <div className="flex h-[145px] w-[345px] shrink-0 flex-col">
            <div className="flex h-[27px] items-center rounded-b-[2px] bg-[#404040] pl-[6px]">
              <button className={`flex h-[21px] w-[65px] items-center rounded-[1px] border border-[#6d9273] bg-[#70836f] pl-1 text-[12px] font-bold text-[#a8a8a8] ${SHADOW}`}>
                <svg width="11" height="11" viewBox="0 0 11 11" className="mr-[3px]"><path d="M5.500 0v11M0 5.500h11" stroke="#a8a8a8" strokeWidth="2.500" /></svg>Track<Caret className="ml-1 text-[#a8a8a8]" />
              </button>
              <button className={`ml-[6px] flex items-center text-[12px] font-medium text-[#959595] ${SHADOW}`}>
                <svg width="9" height="10" viewBox="0 0 10 11" className="mr-[2px]"><path d="M0 0h10L6 5v6L4 9V5z" fill="#959595" /></svg>Filters<Caret className="ml-[2px] text-[#959595]" />
              </button>
              <SearchBox label="Search Tracks" className="ml-2 h-[18px] w-[156px] bg-[#848484]" icon="text-[#222]" hint="placeholder:text-[#5a5a5a]" />
              <span className="ml-[9px] text-[12px] text-[#937f74]">0.00</span>
            </div>
            <div className="flex-1" />
            <div className="flex h-[33px] items-center rounded-[2px] bg-[#404040] pl-[44px] text-[#7d7d7d]">
              {transport.map(([n, w, gap, g]) => (
                <button key={n} aria-label={n} className={gap}>
                  <svg width={w} height="18" viewBox={`0 0 ${w} 18`} fill="currentColor">{g}</svg>
                </button>
              ))}
            </div>
          </div>
          <div className="ml-1 min-w-0 flex-1 overflow-hidden bg-[#222]"><TimeRuler /></div>
        </div>
      </div>
    </section>
  );
}

/* ---------- desktop taskbar ---------- */

function Task({ label, w = "w-[49px]", active, running, children }: { label: string; w?: string; active?: boolean; running?: boolean; children: React.ReactNode }) {
  return (
    <button aria-label={label} className={`relative flex h-full items-center justify-center ${w} ${active ? "bg-[#4a4b52]" : ""}`}>
      {children}
      {(active || running) && <span className={`absolute bottom-0 h-[3px] bg-[#f3a9b5] ${active ? "inset-x-0" : "inset-x-[6px]"}`} />}
    </button>
  );
}

function Taskbar() {
  return (
    <footer className="flex h-10 shrink-0 items-center bg-[linear-gradient(90deg,#211c28,#1a1e28_10%,#1a1e28_90%,#31202a)] font-['Open_Sans','Noto_Sans',sans-serif] text-white">
      <Task label="Start" w="w-12">
        <svg width="16" height="16" viewBox="0 0 16 16"><path d="M0 2.300L6.500 1.400V7.600H0zM7.300 1.300L16 0v7.600H7.300zM0 8.400h6.500v6.200L0 13.700zM7.300 8.400H16V16l-8.700-1.300z" fill="#fff" /></svg>
      </Task>
      <label className="flex h-full w-[344px] items-center border border-[#5e5e60] bg-[#303032] pl-3">
        <svg width="17" height="17" viewBox="0 0 17 17" aria-hidden="true"><circle cx="10" cy="6.500" r="5.500" fill="none" stroke="#ddd" strokeWidth="1.300" /><path d="M6 10.500L.5 16.500" stroke="#ddd" strokeWidth="1.400" /></svg>
        <input aria-label="Search Windows" placeholder="Type here to search" className="ml-[10px] min-w-0 flex-1 bg-transparent text-[14px] outline-none placeholder:text-[#cfcfcf]" />
      </label>
      <Task label="Cortana" w="w-12"><svg width="18" height="18" viewBox="0 0 18 18"><circle cx="9" cy="9" r="7" fill="none" stroke="#fff" strokeWidth="2.200" /></svg></Task>
      <Task label="Task view" w="w-12"><svg width="17" height="16" viewBox="0 0 17 16"><path d="M1 0v2.500h10V0M1 16v-2.500h10V16M1.500 5h9v6h-9zM14.500 0v4M14.500 9v7" fill="none" stroke="#fff" strokeWidth="1.300" /><rect x="13" y="5" width="3" height="3" fill="#fff" /></svg></Task>
      <Task label="Chrome" running w="w-[53px]">
        <svg width="22" height="22" viewBox="0 0 22 22"><circle cx="11" cy="11" r="11" fill="#fcc934" /><path d="M11 11L1.500 5.500A11 11 0 0 0 11.500 22L16 13z" fill="#1ea05a" /><path d="M1.500 5.500A11 11 0 0 1 20.600 6H11a5 5 0 0 0-4.700 6.500z" fill="#e04a3c" /><circle cx="11" cy="11" r="5" fill="#fff" /><circle cx="11" cy="11" r="4" fill="#4285f4" /></svg>
      </Task>
      <Task label="File Explorer" w="w-[46px]"><svg width="22" height="20" viewBox="0 0 22 20"><path d="M0 1h8l2 2h11v16H0z" fill="#e3a62b" /><path d="M0 5h22v14H0z" fill="#fbd667" /><path d="M4 11h14v8h-4v-4H8v4H4z" fill="#3c8ede" /></svg></Task>
      <Task label="Store" w="w-[50px]"><svg width="24" height="24" viewBox="0 0 24 24"><path d="M8 6V4a4 4 0 0 1 8 0v2" fill="none" stroke="#fff" strokeWidth="1.500" /><path d="M1 6h22v15a2 2 0 0 1-2 2H3a2 2 0 0 1-2-2z" fill="#fff" /><path d="M6 9h5.500v5H6z" fill="#f25022" /><path d="M12.500 9H18v5h-5.500z" fill="#7fba00" /><path d="M6 15h5.500v5H6z" fill="#00a4ef" /><path d="M12.500 15H18v5h-5.500z" fill="#ffb900" /></svg></Task>
      <Task label="Steam" w="w-[50px]"><svg width="22" height="22" viewBox="0 0 22 22"><defs><linearGradient id="st" x1="0" y1="0" x2="0" y2="1"><stop offset="0" stopColor="#141c3c" /><stop offset="1" stopColor="#1b87c0" /></linearGradient></defs><circle cx="11" cy="11" r="11" fill="url(#st)" /><path d="M0 11l7 3 5-5 4 3-6 5a3.400 3.400 0 0 1-6 0l-4-2z" fill="#fff" /><circle cx="14.500" cy="8" r="4.200" fill="#fff" /><circle cx="14.500" cy="8" r="2.400" fill="#1b3f6a" /><circle cx="7.500" cy="16" r="2" fill="#1b6ca4" /></svg></Task>
      <Task label="Unreal Editor" active w="w-12"><UnrealMark size={24} ring /></Task>
      <div className="ml-auto flex h-full items-center gap-[9px] text-[12px]">
        <button aria-label="Hidden icons"><svg width="12" height="8" viewBox="0 0 12 8"><path d="M1 7l5-5 5 5" fill="none" stroke="#fff" strokeWidth="1.300" /></svg></button>
        <svg width="16" height="15" viewBox="0 0 16 15" role="img" aria-label="Battery"><path d="M2 0v3M5 0v3M1 3h5v3H4v3H1M5 12.500h9v-8H7" fill="none" stroke="#fff" strokeWidth="1.200" /><path d="M6 6h7v5H6z" fill="#fff" /><path d="M15.300 6v5" stroke="#fff" /></svg>
        <svg width="16" height="16" viewBox="0 0 16 16" role="img" aria-label="Volume"><path d="M1 5.500h2.500L7 2v12l-3.500-3.500H1z" fill="none" stroke="#fff" strokeWidth="1.200" /><path d="M9 6q1.500 2 0 4M11 4q3 4 0 8" fill="none" stroke="#ccc" /><path d="M13 2.500q4 5.500 0 11" fill="none" stroke="#777" /></svg>
        <svg width="18" height="20" viewBox="0 0 18 20" role="img" aria-label="Logitech"><path d="M9 2.200A8 8 0 0 0 9 17.800M9 9.500h6.500V17" fill="none" stroke="#00b0f0" strokeWidth="3.600" /></svg>
        <svg width="14" height="16" viewBox="0 0 14 16" role="img" aria-label="Network"><path d="M1 14A12 12 0 0 1 13 2M4 15A9 9 0 0 1 13 5.500M7 15.500A6 6 0 0 1 13 9.500" fill="none" stroke="#ddd" strokeWidth="1.200" /><circle cx="12" cy="14" r="1.800" fill="#fff" /></svg>
        <span>ENG</span>
        <button className="flex w-[60px] flex-col items-center whitespace-nowrap leading-[18px]"><span>6:28 PM</span><span>17-Nov-19</span></button>
        <button aria-label="Notifications" className="relative ml-[3px] h-10 w-[40px]">
          <svg width="18" height="18" viewBox="0 0 18 18" className="absolute left-0 top-3"><path d="M1 0h16v14H8l-4 4v-4H1z" fill="#fff" /><path d="M4 4h10M4 7h10M4 10h6" stroke="#222" strokeWidth="1.300" /></svg>
          <span className="absolute left-[6px] top-4 flex h-[21px] w-[21px] items-center justify-center rounded-full border border-[#bbb] bg-[#3a3336] text-[12px] font-semibold">20</span>
        </button>
      </div>
      <div className="mr-[2px] h-full w-px bg-[#6a6068]" />
    </footer>
  );
}

export default function App() {
  return (
    <div className="flex h-screen min-h-[740px] flex-col overflow-hidden bg-[#212121] font-[Roboto,'Liberation_Sans',sans-serif]">
      <TitleBar />
      <MenuBar />
      <Toolbar />
      <div className="mt-[5px] flex min-h-0 flex-1 gap-[5px] pl-[1px] pr-0">
        <div className="flex w-[203px] shrink-0 flex-col"><Palette /><Hierarchy /></div>
        <Viewport />
        <Details />
      </div>
      <div className="mb-[2px] mt-[5px] flex h-[203px] shrink-0 gap-[6px] pl-[1px] pr-[1px]">
        <Animations />
        <Timeline />
      </div>
      <Taskbar />
    </div>
  );
}
